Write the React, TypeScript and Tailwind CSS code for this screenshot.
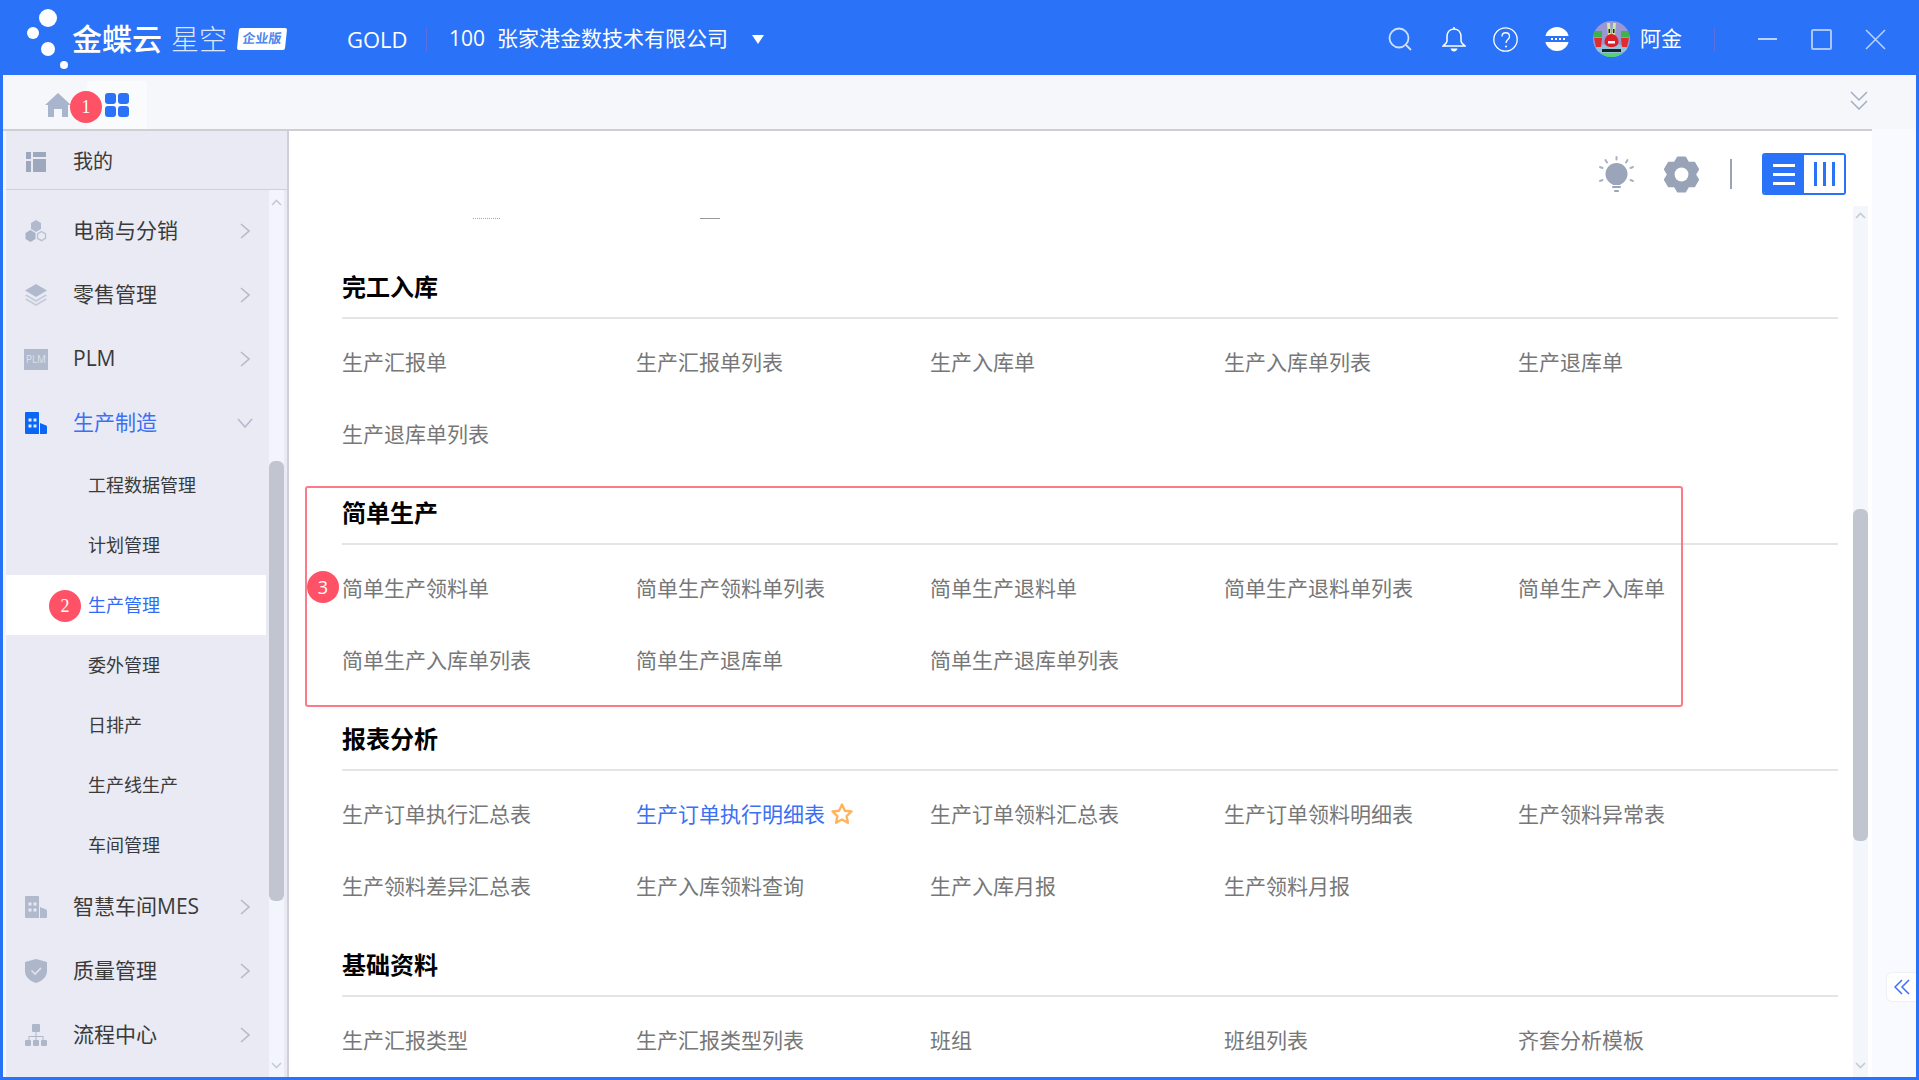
import type { ReactNode } from "react";

const BLUE = "#2a72f8";

// six tooth gear outline, top tooth first
const gearPoints = [0, 1, 2, 3, 4, 5]
  .flatMap((i) => {
    const a = (i * Math.PI) / 3 - Math.PI / 2;
    const pt = (r: number, d: number) =>
      `${(12 + r * Math.cos(a + d)).toFixed(2)},${(12 + r * Math.sin(a + d)).toFixed(2)}`;
    return [pt(8.8, -0.5), pt(11.2, -0.22), pt(11.2, 0.22), pt(8.8, 0.5)];
  })
  .join(" ");

function Badge({ n, serif, className }: { n: string; serif?: boolean; className: string }) {
  return (
    <span
      className={
        "absolute flex h-[32px] w-[32px] items-center justify-center rounded-full bg-[#ff5266] text-[18px] text-white " +
        (serif ? "[font-family:'Liberation_Serif',serif] " : "") +
        className
      }
    >
      {n}
    </span>
  );
}

function ChevronRight() {
  return (
    <svg width="10" height="16" viewBox="0 0 10 16" fill="none" stroke="#b3bacb" strokeWidth="1.6">
      <path d="M1 1l8 7-8 7" />
    </svg>
  );
}

function ChevronDown() {
  return (
    <svg width="16" height="10" viewBox="0 0 16 10" fill="none" stroke="#b3bacb" strokeWidth="1.6">
      <path d="M1 1l7 8 7-8" />
    </svg>
  );
}

function ScrollArrow({ down }: { down?: boolean }) {
  return (
    <svg width="11" height="7" viewBox="0 0 11 7" fill="none" stroke="#c6cad3" strokeWidth="1.6">
      <path d={down ? "M1 1l4.5 4.5L10 1" : "M1 6l4.5-4.5L10 6"} />
    </svg>
  );
}

function MyIcon() {
  return (
    <svg width="20" height="20" viewBox="0 0 20 20" fill="#9da8bd">
      <rect x="0" y="0" width="5" height="7" />
      <rect x="0" y="9" width="5" height="11" />
      <rect x="7" y="0" width="13" height="5" />
      <rect x="7" y="7" width="13" height="13" />
    </svg>
  );
}

function ShopIcon() {
  return (
    <svg width="22" height="22" viewBox="0 0 22 22">
      <path d="M11 0l5 3v6l-5 3-5-3V3z" fill="#b1bacd" />
      <path d="M5.500 10l5 3v6l-5 3-5-3v-6z" fill="#a9b3c8" />
      <path d="M16.500 11.500l4 2.300v4.600l-4 2.300-4-2.300v-4.600z" fill="none" stroke="#b9c1d2" strokeWidth="1.400" />
    </svg>
  );
}

function LayersIcon() {
  return (
    <svg width="22" height="22" viewBox="0 0 22 22" fill="#b1bacd">
      <path d="M11 0l11 6.500-11 6.500L0 6.500z" />
      <path d="M1.500 10.500L11 16l9.500-5.500 1.500 1-11 6.500-11-6.500z" fill="#c3cad9" />
      <path d="M1.500 14.500L11 20l9.500-5.500 1.500 1-11 6.500-11-6.500z" fill="#c3cad9" />
    </svg>
  );
}

function PlmIcon() {
  return (
    <span className="flex h-[21px] w-[24px] items-center justify-center bg-[#b1bacd] text-[10px] text-[#dde1ea]">PLM</span>
  );
}

function BuildingIcon({ color }: { color: string }) {
  return (
    <svg width="22" height="22" viewBox="0 0 22 22">
      <path d="M1 0h12a1 1 0 0 1 1 1v21H1a1 1 0 0 1-1-1V1a1 1 0 0 1 1-1z" fill={color} />
      <path d="M15 11l5 2a2 2 0 0 1 2 2v6a1 1 0 0 1-1 1h-6z" fill={color} />
      <g fill="#e9eaf3">
        <rect x="3.500" y="6.500" width="3" height="3" />
        <rect x="8.500" y="6.500" width="3" height="3" />
        <rect x="3.500" y="12.500" width="3" height="3" />
        <rect x="8.500" y="12.500" width="3" height="3" />
      </g>
    </svg>
  );
}

function ShieldIcon() {
  return (
    <svg width="22" height="24" viewBox="0 0 22 24">
      <path d="M11 0l11 3v9c0 6-5 10-11 12C5 22 0 18 0 12V3z" fill="#aeb7ca" />
      <path d="M6.500 11.500l3.500 3.500 6-6" fill="none" stroke="#dfe3ec" strokeWidth="1.600" />
    </svg>
  );
}

function OrgIcon() {
  return (
    <svg width="22" height="22" viewBox="0 0 22 22" fill="#aeb7ca">
      <rect x="7" y="0" width="8" height="8" rx="1" />
      <path d="M10.500 8h1v4h7v4h-1v-3h-6v3h-1v-3h-6v3h-1v-4h7z" />
      <rect x="0" y="16" width="6" height="6" rx="1" />
      <rect x="8" y="16" width="6" height="6" rx="1" />
      <rect x="16" y="16" width="6" height="6" rx="1" />
    </svg>
  );
}

function MenuRow({ icon, label, open, active }: { icon: ReactNode; label: string; open?: boolean; active?: boolean }) {
  return (
    <div className="flex h-[64px] items-center pr-[16px]">
      <span className="ml-[18px] mr-[25px] flex w-[24px] justify-center">{icon}</span>
      <span className={"text-[21px] " + (active ? "text-[#3b6ff5]" : "text-[#3a3a3a]")}>{label}</span>
      <span className="ml-auto flex w-[16px] justify-center">{open ? <ChevronDown /> : <ChevronRight />}</span>
    </div>
  );
}

function SubRow({ label, active }: { label: string; active?: boolean }) {
  return (
    <div
      className={
        "relative flex h-[60px] w-[260px] items-center pl-[82px] text-[18px] " +
        (active ? "bg-white text-[#2f6bf5]" : "text-[#3a3a3a]")
      }
    >
      {active && <Badge n="2" serif className="left-[43px] top-[15px]" />}
      {label}
    </div>
  );
}

function Sidebar() {
  return (
    <aside className="flex w-[283px] shrink-0 flex-col border-r-2 border-[#cdd0d8] bg-[#e9eaf3]">
      <div className="flex h-[59px] shrink-0 items-center border-b border-[#cfd1d8] pt-[4px]">
        <span className="ml-[20px]">
          <MyIcon />
        </span>
        <span className="ml-[27px] text-[20px] text-[#3a3a3a]">我的</span>
      </div>
      <div className="flex min-h-0 flex-1">
        <nav className="w-[263px] overflow-hidden pt-[9px]">
          <MenuRow icon={<ShopIcon />} label="电商与分销" />
          <MenuRow icon={<LayersIcon />} label="零售管理" />
          <MenuRow icon={<PlmIcon />} label="PLM" />
          <MenuRow icon={<BuildingIcon color="#0a66f5" />} label="生产制造" open active />
          <SubRow label="工程数据管理" />
          <SubRow label="计划管理" />
          <SubRow label="生产管理" active />
          <SubRow label="委外管理" />
          <SubRow label="日排产" />
          <SubRow label="生产线生产" />
          <SubRow label="车间管理" />
          <MenuRow icon={<BuildingIcon color="#b1bacd" />} label="智慧车间MES" />
          <MenuRow icon={<ShieldIcon />} label="质量管理" />
          <MenuRow icon={<OrgIcon />} label="流程中心" />
        </nav>
        <div className="mr-[3px] flex w-[15px] flex-col bg-[#f3f5fc]">
          <div className="flex h-[271px] justify-center pt-[9px]">
            <ScrollArrow />
          </div>
          <div className="h-[440px] rounded-[6px] bg-[#c0c5cf]" />
          <div className="flex flex-1 items-end justify-center pb-[8px]">
            <ScrollArrow down />
          </div>
        </div>
      </div>
    </aside>
  );
}

function Section({
  title,
  items,
  children,
  highlight,
}: {
  title: string;
  items: ReactNode[];
  children?: ReactNode;
  highlight?: boolean;
}) {
  return (
    <section className="relative mb-[12px]">
      <h2 className="flex h-[62px] items-center border-b-2 border-[#e5e5e5] text-[24px] font-bold text-black">{title}</h2>
      <div className="grid auto-rows-[72.5px] grid-cols-[294px_294px_294px_294px_1fr] items-center pt-[7px] text-[21px] text-[#777]">
        {items.map((item, i) => (
          <div key={i}>{item}</div>
        ))}
      </div>
      {highlight && (
        <div className="absolute left-[-37px] right-[155px] top-[3px] h-[221px] rounded-[3px] border-2 border-[#fd7b88]" />
      )}
      {children}
    </section>
  );
}

function Toolbar() {
  return (
    <div className="flex h-[75px] shrink-0 items-center justify-end pr-[26px] pt-[11px]">
      <svg width="36" height="37" viewBox="0 0 36 37" fill="#9aa5ba">
        <circle cx="17.500" cy="18" r="11" />
        <path d="M12 26h11l-2 3h-7z" />
        <rect x="13" y="30" width="9" height="2" rx="1" />
        <rect x="15" y="34" width="5" height="2" rx="1" />
        <g stroke="#a9b2c5" strokeWidth="2" strokeLinecap="round">
          <path d="M17.500 1v2.500M6.500 4l1.500 2.500M28.500 4L27 6.500M1 11l2.500 1M34 11l-2.500 1M1 25l2.500-1M34 25l-2.500-1" />
        </g>
      </svg>
      <svg className="ml-[28px]" width="37" height="37" viewBox="0 0 24 24">
        <polygon points={gearPoints} fill="#98a3b8" stroke="#98a3b8" strokeWidth="1.400" strokeLinejoin="round" />
        <circle cx="12" cy="12" r="4.500" fill="white" />
      </svg>
      <span className="ml-[30px] h-[30px] w-[2px] bg-[#9aa4b8]" />
      <div className="ml-[30px] flex h-[42px] w-[84px] overflow-hidden rounded-[3px] border-2 border-[#2a72f8]">
        <div className="flex w-[40px] flex-col items-center justify-center gap-[6px] bg-[#2a72f8]">
          <span className="h-[3px] w-[22px] bg-white" />
          <span className="h-[3px] w-[22px] bg-white" />
          <span className="h-[3px] w-[22px] bg-white" />
        </div>
        <div className="flex flex-1 items-center justify-center gap-[6px] bg-white">
          <span className="h-[24px] w-[3px] bg-[#2a72f8]" />
          <span className="h-[24px] w-[3px] bg-[#2a72f8]" />
          <span className="h-[24px] w-[3px] bg-[#2a72f8]" />
        </div>
      </div>
    </div>
  );
}

function Content() {
  return (
    <main className="flex min-w-0 flex-1 flex-col bg-white">
      <Toolbar />
      <div className="flex min-h-0 flex-1 pr-[4px]">
        <div className="min-w-0 flex-1 overflow-hidden pl-[53px] pr-[15px]">
          <div className="flex h-[51px] pt-[12px]">
            <span className="ml-[131px] h-[1px] w-[27px] border-t border-dotted border-[#aaa]" />
            <span className="ml-[200px] h-[1px] w-[20px] bg-[#999]" />
          </div>
          <Section
            title="完工入库"
            items={["生产汇报单", "生产汇报单列表", "生产入库单", "生产入库单列表", "生产退库单", "生产退库单列表"]}
          />
          <Section
            title="简单生产"
            highlight
            items={[
              "简单生产领料单",
              "简单生产领料单列表",
              "简单生产退料单",
              "简单生产退料单列表",
              "简单生产入库单",
              "简单生产入库单列表",
              "简单生产退库单",
              "简单生产退库单列表",
            ]}
          >
            <Badge n="3" className="left-[-35px] top-[88px]" />
          </Section>
          <Section
            title="报表分析"
            items={[
              "生产订单执行汇总表",
              <span className="flex items-center text-[#3b6ff5]">
                生产订单执行明细表
                <svg className="ml-[5px]" width="24" height="24" viewBox="0 0 24 24" fill="none" stroke="#ffb35c" strokeWidth="2.400" strokeLinejoin="round">
                  <path d="M12 2.500l2.900 6.200 6.600.8-4.900 4.600 1.300 6.700L12 17.500l-5.900 3.300 1.300-6.700L2.500 9.500l6.600-.8z" />
                </svg>
              </span>,
              "生产订单领料汇总表",
              "生产订单领料明细表",
              "生产领料异常表",
              "生产领料差异汇总表",
              "生产入库领料查询",
              "生产入库月报",
              "生产领料月报",
            ]}
          />
          <Section title="基础资料" items={["生产汇报类型", "生产汇报类型列表", "班组", "班组列表", "齐套分析模板"]} />
        </div>
        <div className="flex w-[15px] shrink-0 flex-col bg-[#f3f6fb]">
          <div className="flex h-[303px] justify-center pt-[6px]">
            <ScrollArrow />
          </div>
          <div className="h-[332px] rounded-[6px] bg-[#c0c5cf]" />
          <div className="flex flex-1 items-end justify-center pb-[8px]">
            <ScrollArrow down />
          </div>
        </div>
      </div>
    </main>
  );
}

function Avatar() {
  return (
    <svg width="37" height="36" viewBox="0 0 37 36">
      <defs>
        <clipPath id="av">
          <ellipse cx="18.500" cy="18" rx="18.500" ry="18" />
        </clipPath>
      </defs>
      <g clipPath="url(#av)">
        <rect width="37" height="36" fill="#9a97d2" />
        <ellipse cx="18.500" cy="28" rx="16" ry="5" fill="#8fc3dc" />
        <rect y="32" width="37" height="4" fill="#55d36e" />
        <rect x="9" y="28" width="19" height="3" fill="#1f1f24" />
        <path d="M14 2h3l1 13h-3zM20 2h3l-1 13h-3z" fill="#cdeb9e" />
        <rect x="15.500" y="8" width="1.500" height="4" fill="#222" />
        <rect x="20" y="8" width="1.500" height="4" fill="#222" />
        <path d="M18.500 13c4 0 7 4 7 8 0 3-3 5-7 5s-7-2-7-5c0-4 3-8 7-8z" fill="#de1f2b" />
        <rect x="15" y="20" width="7" height="2.500" fill="white" />
        <path d="M1 17h8l-1 9H3z" fill="#de2c30" />
        <path d="M28 17h8l-2 9h-5z" fill="#de2c30" />
        <rect x="1" y="10" width="8" height="6" fill="#3fb24f" />
        <rect x="28" y="10" width="8" height="6" fill="#3fb24f" />
      </g>
    </svg>
  );
}

function Header() {
  return (
    <header className="flex h-[75px] shrink-0 items-center bg-[#2a72f8] pl-[24px] pr-[33px] pt-[3px] text-white">
      <svg className="-mt-[3px]" width="46" height="75" viewBox="0 0 46 75" fill="white">
        <circle cx="24" cy="18" r="9" />
        <circle cx="9" cy="33" r="6" />
        <circle cx="24" cy="49" r="7" />
        <circle cx="40" cy="65" r="4" />
      </svg>
      <span className="ml-[2px] w-[92px] text-[30px] font-medium leading-none">金蝶云</span>
      <span className="ml-[7px] w-[57px] text-[28px] font-light leading-none text-[#dbe7ff]">星空</span>
      <span className="ml-[10px] flex h-[22px] w-[48px] -skew-x-6 items-center justify-center rounded-[2px] bg-white text-[13px] font-bold text-[#4f86ee]">
        企业版
      </span>
      <span className="ml-[61px] w-[60px] text-[22px]">GOLD</span>
      <span className="ml-[19px] h-[25px] w-px bg-[#5c6fe0]" />
      <span className="ml-[22px] w-[36px] text-[21px]">100</span>
      <span className="ml-[12px] w-[231px] whitespace-nowrap text-[21px]">张家港金数技术有限公司</span>
      <span className="ml-[24px] h-0 w-0 border-x-[6px] border-t-[9px] border-x-transparent border-t-white" />

      <svg className="ml-auto" width="24" height="24" viewBox="0 0 24 24" fill="none" stroke="#cfe0ff" strokeWidth="1.800">
        <circle cx="11" cy="11" r="9.500" />
        <path d="M18 18l5 5" />
      </svg>
      <svg className="ml-[30px]" width="24" height="26" viewBox="0 0 24 26" fill="none" stroke="white" strokeWidth="1.500">
        <path d="M12 1v2M12 3c-5 0-7 4-7 8v4c0 2-2 3-4 5h22c-2-2-4-3-4-5v-4c0-4-2-8-7-8z" />
        <path d="M8.500 22.500h7c-.5 2-2 3-3.500 3s-3-1-3.500-3z" fill="white" stroke="none" />
      </svg>
      <svg className="ml-[27px]" width="25" height="25" viewBox="0 0 25 25" fill="none" stroke="white" strokeWidth="1.300">
        <circle cx="12.500" cy="12.500" r="11.700" />
        <path d="M9 9.500c0-5 7.500-5 7.500 0 0 3-3.500 3-3.500 6.500" />
        <circle cx="13" cy="19.500" r="1" fill="white" stroke="none" />
      </svg>
      <svg className="ml-[27px]" width="24" height="24" viewBox="0 0 24 24">
        <circle cx="12" cy="12" r="12" fill="white" />
        <rect x="0" y="9" width="24" height="6" fill="#2a72f8" />
        <g fill="white">
          <rect x="6" y="11" width="2" height="2" />
          <rect x="10" y="11" width="2" height="2" />
          <rect x="14" y="11" width="2" height="2" />
          <rect x="18" y="11" width="2" height="2" />
        </g>
      </svg>
      <span className="ml-[24px]">
        <Avatar />
      </span>
      <span className="ml-[10px] w-[42px] text-[21px]">阿金</span>
      <span className="ml-[32px] h-[25px] w-px bg-[#5c6fe0]" />
      <span className="ml-[43px] h-[2px] w-[19px] bg-[#bcd3ff]" />
      <span className="ml-[34px] h-[21px] w-[21px] rounded-[2px] border-2 border-[#a9c6ff]" />
      <svg className="ml-[33px]" width="21" height="21" viewBox="0 0 21 21" fill="none" stroke="#bcd3ff" strokeWidth="1.500">
        <path d="M1 1l19 19M20 1L1 20" />
      </svg>
    </header>
  );
}

function TabBar() {
  return (
    <div className="flex h-[54px] shrink-0 items-center bg-[#f5f7fb] pl-[42px]">
      <svg className="mt-[6px]" width="26" height="24" viewBox="0 0 26 24" fill="#a9b5cc">
        <path d="M13 0l13 12h-3v12h-6v-8H9v8H3V12H0z" />
      </svg>
      <div className="relative ml-[16px] flex h-[48px] w-[60px] items-center justify-center self-end rounded-t-[4px] bg-[#fafbfd]">
        <Badge n="1" serif className="left-[-17px] top-[10px]" />
        <div className="grid grid-cols-[11px_11px] grid-rows-[11px_11px] gap-[2px]">
          <span className="rounded-[3px] bg-[#2a72f8]" />
          <span className="rounded-[3px] bg-[#2a72f8]" />
          <span className="rounded-[3px] bg-[#2a72f8]" />
          <span className="rounded-[3px] bg-[#2a72f8]" />
        </div>
      </div>
      <svg className="-mt-[3px] ml-auto mr-[48px]" width="18" height="19" viewBox="0 0 18 19" fill="none" stroke="#a3adc2" strokeWidth="1.500">
        <path d="M1 1l8 8 8-8M1 10l8 8 8-8" />
      </svg>
    </div>
  );
}

export default function App() {
  return (
    <div
      className="flex h-[1080px] w-[1919px] flex-col overflow-hidden text-[#333] [font-family:'Open_Sans','Noto_Sans_CJK_SC',sans-serif]"
      style={{ backgroundColor: BLUE }}
    >
      <Header />
      <div className="flex min-h-0 flex-1 flex-col border-x-[3px] border-b-[3px] border-[#2a72f8] bg-[#f5f7fb]">
        <TabBar />
        <div className="flex min-h-0 flex-1">
          <div className="flex min-w-0 w-[1869px] shrink-0 border-t-2 border-[#cfcfd3] pl-[3px]">
            <Sidebar />
            <Content />
          </div>
          <div className="relative flex-1 bg-[#f9faff]">
            <div className="absolute right-0 top-[843px] flex h-[30px] w-[30px] items-center justify-center rounded-l-[6px] border border-r-0 border-[#eef0f6] bg-white">
              <svg width="16" height="16" viewBox="0 0 16 16" fill="none" stroke="#3b6ff5" strokeWidth="1.500">
                <path d="M8 1L1 8l7 7M15 1L8 8l7 7" />
              </svg>
            </div>
          </div>
        </div>
      </div>
    </div>
  );
}
